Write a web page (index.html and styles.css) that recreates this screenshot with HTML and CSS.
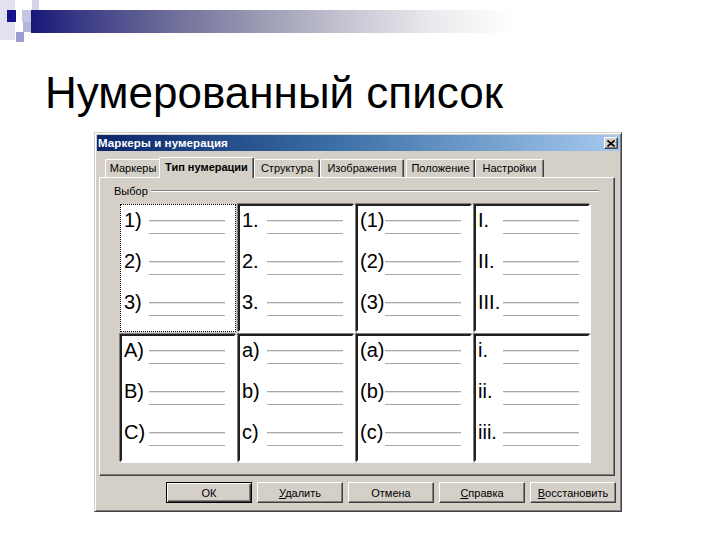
FILE: index.html
```html
<!DOCTYPE html>
<html lang="ru">
<head>
<meta charset="utf-8">
<title>Нумерованный список</title>
<link rel="stylesheet" href="styles.css">
</head>
<body>
<div class="slide">
  <div class="deco">
    <span class="sq sq-a"></span>
    <span class="sq sq-b"></span>
    <span class="sq sq-c"></span>
    <span class="sq sq-d"></span>
    <span class="sq sq-e"></span>
    <span class="sq sq-f"></span>
    <span class="bar"></span>
  </div>
  <h1 class="title">Нумерованный список</h1>

  <div class="dialog">
    <div class="titlebar">
      <span class="caption">Маркеры и нумерация</span>
      <span class="close">
        <svg width="8" height="7" viewBox="0 0 8 7"><path d="M0.5 0.5 L7.5 6.5 M7.5 0.5 L0.5 6.5" stroke="#000" stroke-width="1.6" fill="none"/></svg>
      </span>
    </div>
    <div class="tabs">
      <div class="tab t1">Маркеры</div>
      <div class="tab t2 active">Тип нумерации</div>
      <div class="tab t3">Структура</div>
      <div class="tab t4">Изображения</div>
      <div class="tab t5">Положение</div>
      <div class="tab t6">Настройки</div>
    </div>
    <div class="panel">
      <div class="group"><span class="group-label">Выбор</span><span class="group-line"></span></div>
      <div class="grid">
        <div class="cell selected">
          <div class="item"><span class="lbl">1)</span><span class="lines"></span></div>
          <div class="item"><span class="lbl">2)</span><span class="lines"></span></div>
          <div class="item"><span class="lbl">3)</span><span class="lines"></span></div>
        </div>
        <div class="cell">
          <div class="item"><span class="lbl">1.</span><span class="lines"></span></div>
          <div class="item"><span class="lbl">2.</span><span class="lines"></span></div>
          <div class="item"><span class="lbl">3.</span><span class="lines"></span></div>
        </div>
        <div class="cell">
          <div class="item"><span class="lbl">(1)</span><span class="lines"></span></div>
          <div class="item"><span class="lbl">(2)</span><span class="lines"></span></div>
          <div class="item"><span class="lbl">(3)</span><span class="lines"></span></div>
        </div>
        <div class="cell">
          <div class="item"><span class="lbl">I.</span><span class="lines"></span></div>
          <div class="item"><span class="lbl">II.</span><span class="lines"></span></div>
          <div class="item"><span class="lbl">III.</span><span class="lines"></span></div>
        </div>
        <div class="cell">
          <div class="item"><span class="lbl">A)</span><span class="lines"></span></div>
          <div class="item"><span class="lbl">B)</span><span class="lines"></span></div>
          <div class="item"><span class="lbl">C)</span><span class="lines"></span></div>
        </div>
        <div class="cell">
          <div class="item"><span class="lbl">a)</span><span class="lines"></span></div>
          <div class="item"><span class="lbl">b)</span><span class="lines"></span></div>
          <div class="item"><span class="lbl">c)</span><span class="lines"></span></div>
        </div>
        <div class="cell">
          <div class="item"><span class="lbl">(a)</span><span class="lines"></span></div>
          <div class="item"><span class="lbl">(b)</span><span class="lines"></span></div>
          <div class="item"><span class="lbl">(c)</span><span class="lines"></span></div>
        </div>
        <div class="cell">
          <div class="item"><span class="lbl">i.</span><span class="lines"></span></div>
          <div class="item"><span class="lbl">ii.</span><span class="lines"></span></div>
          <div class="item"><span class="lbl">iii.</span><span class="lines"></span></div>
        </div>
      </div>
    </div>
    <div class="buttons">
      <button class="btn default">ОК</button>
      <button class="btn"><u>У</u>далить</button>
      <button class="btn">Отмена</button>
      <button class="btn"><u>С</u>правка</button>
      <button class="btn"><u>В</u>осстановить</button>
    </div>
  </div>
</div>
</body>
</html>
```

FILE: styles.css
```css
html, body {
  margin: 0;
  padding: 0;
  background: #ffffff;
}

.slide {
  width: 720px;
  height: 540px;
  overflow: hidden;
  font-family: "Liberation Sans", Arial, sans-serif;
}

/* header decoration */
.deco {
  position: relative;
  height: 71px;
}
.sq, .bar {
  position: absolute;
  display: block;
}
.sq-a { left: 0; top: 0; width: 15px; height: 40px; background: #e2e2ee; }
.sq-b { left: 32px; top: 0; width: 7px; height: 10px; background: #d4d4e8; }
.sq-c { left: 22px; top: 10px; width: 17px; height: 12px; background: #c6c6e0; }
.sq-d { left: 23px; top: 22px; width: 8px; height: 10px; background: #b4b4d8; }
.sq-e { left: 16px; top: 32px; width: 8px; height: 10px; background: #9d9dd0; }
.sq-f { left: 7px; top: 10px; width: 9px; height: 12px; background: #14148a; }
.bar {
  left: 31px;
  top: 10px;
  width: 480px;
  height: 23px;
  background: linear-gradient(to right, #17177a 0%, #3a3a86 10%, #6a6a98 28%, #9c9cb4 48%, #cacad6 68%, #ececf0 85%, #ffffff 100%);
}

.title {
  margin: 0 0 0 45px;
  font-family: "Liberation Sans", Arial, sans-serif;
  font-weight: normal;
  font-size: 44px;
  line-height: 44px;
  color: #000;
}

/* dialog */
.dialog {
  box-sizing: border-box;
  margin: 17px 0 0 94px;
  width: 528px;
  height: 380px;
  padding: 1px;
  background: #d4d0c8;
  border: 1px solid;
  border-color: #d4d0c8 #404040 #404040 #d4d0c8;
  box-shadow: inset 1px 1px 0 #ffffff, inset -1px -1px 0 #808080;
  font-family: "Liberation Sans", Arial, sans-serif;
  font-size: 11px;
  color: #000;
}

.titlebar {
  height: 16px;
  margin: 1px 0 0 1px;
  padding: 0 2px 0 1px;
  display: flex;
  align-items: center;
  justify-content: space-between;
  background: linear-gradient(to right, #0a246a, #3a6ea5 45%, #a6caf0);
}
.caption {
  color: #fff;
  font-weight: bold;
  font-size: 11.5px;
  letter-spacing: 0.1px;
}
.close {
  box-sizing: border-box;
  width: 14px;
  height: 12px;
  display: flex;
  align-items: center;
  justify-content: center;
  background: #d4d0c8;
  border: 1px solid;
  border-color: #ffffff #404040 #404040 #ffffff;
  box-shadow: inset -1px -1px 0 #808080;
}

.tabs {
  display: flex;
  align-items: flex-end;
  height: 21px;
  margin: 6px 0 0 9px;
  position: relative;
  z-index: 2;
}
.tab {
  box-sizing: border-box;
  height: 18px;
  margin-bottom: 1px;
  padding-top: 2px;
  text-align: center;
  background: #d4d0c8;
  border-top: 1px solid #ffffff;
  border-left: 1px solid #ffffff;
  border-right: 1px solid #404040;
  border-radius: 2px 2px 0 0;
  box-shadow: inset -1px 0 0 #808080;
  white-space: nowrap;
}
.tab.active {
  height: 21px;
  margin: 0 -2px 0 -2px;
  padding-top: 3px;
  font-weight: bold;
  position: relative;
  z-index: 3;
}
.t1 { width: 56px; }
.t2 { width: 95px; }
.t3 { width: 66px; margin-left: 2px; }
.t4 { width: 84px; }
.t5 { width: 69px; margin-left: 2px; }
.t6 { width: 69px; }

.panel {
  box-sizing: border-box;
  height: 299px;
  margin: -1px 5px 0 3px;
  padding: 7px 0 0 0;
  border-top: 1px solid #ffffff;
  border-left: 1px solid #ffffff;
  border-right: 1px solid #404040;
  border-bottom: 1px solid #404040;
  box-shadow: inset -1px -1px 0 #808080;
}

.group {
  display: flex;
  align-items: center;
  height: 12px;
  margin: 0 15px 0 14px;
}
.group-label {
  padding-right: 3px;
}
.group-line {
  flex: 1;
  height: 0;
  border-top: 1px solid #808080;
  border-bottom: 1px solid #ffffff;
}

.grid {
  display: grid;
  grid-template-columns: repeat(4, 116px);
  grid-template-rows: repeat(2, 128px);
  gap: 2px;
  margin: 7px 0 0 20px;
}

.cell {
  box-sizing: border-box;
  background: #ffffff;
  border: 2px solid;
  border-color: #202020 #ffffff #ffffff #202020;
  box-shadow: 1px 1px 0 #ffffff, -1px -1px 0 #808080;
  padding: 4px 0 0 2px;
  font-family: "Liberation Sans", Arial, sans-serif;
  font-size: 20px;
  line-height: 20px;
}
.cell.selected {
  border: 1px dotted #000;
  box-shadow: none;
  padding: 5px 0 0 3px;
}

.item {
  display: flex;
  height: 41px;
}
.lbl {
  width: 25px;
  flex: none;
  white-space: nowrap;
  color: #000;
}
.lines {
  display: block;
  width: 76px;
  height: 12px;
  margin-top: 10px;
  border-top: 1px solid #a8a8a8;
  border-bottom: 1px solid #a8a8a8;
  box-shadow: inset 0 1px 0 #e4e4e4;
}

.buttons {
  display: flex;
  justify-content: flex-end;
  gap: 5px;
  margin: 6px 4px 0 0;
}
.btn {
  box-sizing: border-box;
  width: 86px;
  height: 21px;
  padding: 0;
  margin: 0;
  font-family: "Liberation Sans", Arial, sans-serif;
  font-size: 11px;
  color: #000;
  background: #d4d0c8;
  border: 1px solid;
  border-color: #ffffff #404040 #404040 #ffffff;
  box-shadow: inset -1px -1px 0 #808080;
}
.btn u {
  text-decoration: underline;
}
.btn.default {
  border: 1px solid #000;
  box-shadow: inset 1px 1px 0 #ffffff, inset -1px -1px 0 #404040, inset -2px -2px 0 #808080;
}
```
